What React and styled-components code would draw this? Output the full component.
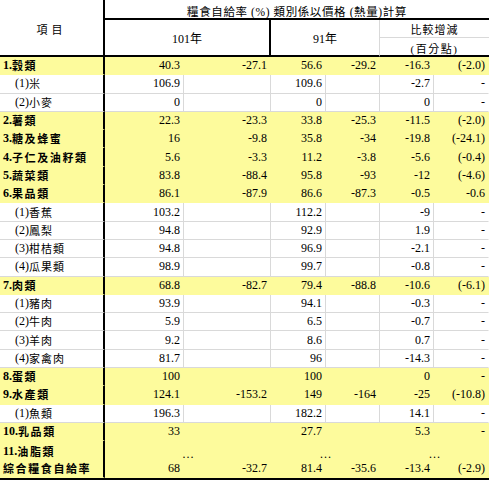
import React from "react";
import styled, { createGlobalStyle } from "styled-components";

const GlobalStyle = createGlobalStyle`
  *, *::before, *::after { box-sizing: border-box; }
  html, body { margin: 0; padding: 0; background: #ffffff; }
  body { font-family: "Liberation Serif", "Noto Sans CJK TC", serif; color: #000; }
`;

const COLS = "105px 79px 87px 55px 54px 54px 55px";
const GRAY = "#d9d9d9";
const YELLOW = "#fdfb9c";
const THICK = "2px solid #000";

const Table = styled.div`
  width: 489px;
  border-bottom: ${THICK};
`;

const Header = styled.div`
  display: grid;
  grid-template-columns: ${COLS};
  grid-template-rows: 20px 18px 19px;
`;

const HCell = styled.div`
  grid-column: ${(p) => p.$col};
  grid-row: ${(p) => p.$row};
  display: flex;
  align-items: center;
  justify-content: center;
  padding-top: ${(p) => p.$pt || 0}px;
  border-right: ${(p) => p.$br || "none"};
  border-bottom: ${(p) => p.$bb || "none"};
  font-family: "Liberation Serif", "Noto Sans CJK TC", serif;
  font-size: ${(p) => p.$fs || 12}px;
  letter-spacing: ${(p) => p.$ls || 0}px;
  white-space: nowrap;
`;

const Row = styled.div`
  display: grid;
  grid-template-columns: ${COLS};
  height: 18.3px;
  background: ${(p) => (p.$hl ? YELLOW : "#ffffff")};
`;

const LabelCell = styled.div`
  display: flex;
  align-items: center;
  padding-left: ${(p) => (p.$sub ? 15 : 3)}px;
  border-right: ${THICK};
  border-bottom: 1px solid ${(p) => (p.$hl ? "transparent" : GRAY)};
  font-weight: ${(p) => (p.$sub ? 400 : 700)};
  white-space: nowrap;
`;

const Prefix = styled.span`
  font-family: "Liberation Serif", serif;
  font-size: 12px;
`;

const Name = styled.span`
  font-family: "Noto Sans CJK TC", sans-serif;
  font-size: 11px;
  letter-spacing: ${(p) => (p.$sub ? 1 : 1.6)}px;
  line-height: 1;
`;

const Cell = styled.div`
  display: flex;
  align-items: center;
  justify-content: flex-end;
  padding-right: 3px;
  font-family: "Liberation Serif", serif;
  font-size: 12px;
  border-right: 1px solid ${(p) => (p.$hl || p.$last ? "transparent" : GRAY)};
  border-bottom: 1px solid ${(p) => (p.$hl ? "transparent" : GRAY)};
  white-space: nowrap;
`;

const SpanCell = styled.div`
  grid-column: ${(p) => p.$col};
  display: flex;
  align-items: center;
  justify-content: center;
  padding-top: 6px;
  font-family: "Liberation Serif", serif;
  font-size: 12px;
`;

const rows = [
  { p: "1.", n: "穀類", hl: true, v: ["40.3", "-27.1", "56.6", "-29.2", "-16.3", "(-2.0)"] },
  { p: "(1)", n: "米", sub: true, v: ["106.9", "", "109.6", "", "-2.7", "-"] },
  { p: "(2)", n: "小麥", sub: true, v: ["0", "", "0", "", "0", "-"] },
  { p: "2.", n: "薯類", hl: true, v: ["22.3", "-23.3", "33.8", "-25.3", "-11.5", "(-2.0)"] },
  { p: "3.", n: "糖及蜂蜜", hl: true, v: ["16", "-9.8", "35.8", "-34", "-19.8", "(-24.1)"] },
  { p: "4.", n: "子仁及油籽類", hl: true, v: ["5.6", "-3.3", "11.2", "-3.8", "-5.6", "(-0.4)"] },
  { p: "5.", n: "蔬菜類", hl: true, v: ["83.8", "-88.4", "95.8", "-93", "-12", "(-4.6)"] },
  { p: "6.", n: "果品類", hl: true, v: ["86.1", "-87.9", "86.6", "-87.3", "-0.5", "-0.6"] },
  { p: "(1)", n: "香蕉", sub: true, v: ["103.2", "", "112.2", "", "-9", "-"] },
  { p: "(2)", n: "鳳梨", sub: true, v: ["94.8", "", "92.9", "", "1.9", "-"] },
  { p: "(3)", n: "柑桔類", sub: true, v: ["94.8", "", "96.9", "", "-2.1", "-"] },
  { p: "(4)", n: "瓜果類", sub: true, v: ["98.9", "", "99.7", "", "-0.8", "-"] },
  { p: "7.", n: "肉類", hl: true, v: ["68.8", "-82.7", "79.4", "-88.8", "-10.6", "(-6.1)"] },
  { p: "(1)", n: "豬肉", sub: true, v: ["93.9", "", "94.1", "", "-0.3", "-"] },
  { p: "(2)", n: "牛肉", sub: true, v: ["5.9", "", "6.5", "", "-0.7", "-"] },
  { p: "(3)", n: "羊肉", sub: true, v: ["9.2", "", "8.6", "", "0.7", "-"] },
  { p: "(4)", n: "家禽肉", sub: true, v: ["81.7", "", "96", "", "-14.3", "-"] },
  { p: "8.", n: "蛋類", hl: true, v: ["100", "", "100", "", "0", "-"] },
  { p: "9.", n: "水產類", hl: true, v: ["124.1", "-153.2", "149", "-164", "-25", "(-10.8)"] },
  { p: "(1)", n: "魚類", sub: true, v: ["196.3", "", "182.2", "", "14.1", "-"] },
  { p: "10.", n: "乳品類", hl: true, v: ["33", "", "27.7", "", "5.3", "-"] },
  { p: "11.", n: "油脂類", hl: true, merged: true },
  { p: "", n: "綜合糧食自給率", hl: true, v: ["68", "-32.7", "81.4", "-35.6", "-13.4", "(-2.9)"] },
];

export default function App() {
  return (
    <>
      <GlobalStyle />
      <Table>
        <Header>
          <HCell $col="1" $row="1 / 4" $br={THICK} $bb={THICK} $fs={11} $ls={4} $pt={2}>
            項目
          </HCell>
          <HCell $col="2 / 8" $row="1" $bb={THICK} $fs={11.5} $ls={0.6} $pt={3}>
            糧食自給率 (%) 類別係以價格 (熱量)計算
          </HCell>
          <HCell $col="2 / 4" $row="2 / 4" $br={THICK} $bb={THICK} $pt={1}>
            101年
          </HCell>
          <HCell $col="4 / 6" $row="2 / 4" $br={`1px solid ${GRAY}`} $bb={THICK} $pt={1}>
            91年
          </HCell>
          <HCell $col="6 / 8" $row="2" $bb={`1px solid ${GRAY}`} $fs={11} $ls={1} $pt={1}>
            比較增減
          </HCell>
          <HCell $col="6 / 8" $row="3" $bb={THICK} $fs={11} $ls={1.5} $pt={3}>
            (百分點)
          </HCell>
        </Header>
        {rows.map((r, i) => (
          <Row key={i} $hl={r.hl}>
            <LabelCell $hl={r.hl} $sub={r.sub}>
              {r.p && <Prefix>{r.p}</Prefix>}
              <Name $sub={r.sub}>{r.n}</Name>
            </LabelCell>
            {r.merged ? (
              <>
                <SpanCell $col="2 / 4">…</SpanCell>
                <SpanCell $col="4 / 6">…</SpanCell>
                <SpanCell $col="6 / 8">…</SpanCell>
              </>
            ) : (
              r.v.map((val, j) => (
                <Cell key={j} $hl={r.hl} $last={j === 5}>
                  {val}
                </Cell>
              ))
            )}
          </Row>
        ))}
      </Table>
    </>
  );
}
